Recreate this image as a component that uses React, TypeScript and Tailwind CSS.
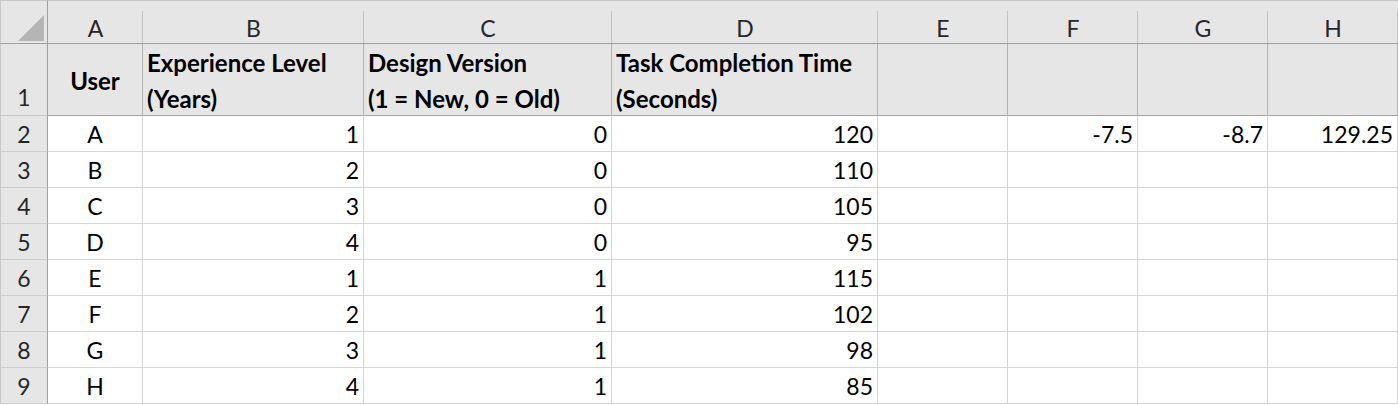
import React from "react";

const letters = ["A", "B", "C", "D", "E", "F", "G", "H"];

const data: string[][] = [
  ["A", "1", "0", "120", "", "-7.5", "-8.7", "129.25"],
  ["B", "2", "0", "110", "", "", "", ""],
  ["C", "3", "0", "105", "", "", "", ""],
  ["D", "4", "0", "95", "", "", "", ""],
  ["E", "1", "1", "115", "", "", "", ""],
  ["F", "2", "1", "102", "", "", "", ""],
  ["G", "3", "1", "98", "", "", "", ""],
  ["H", "4", "1", "85", "", "", "", ""],
];

function ColHeader({ label }: { label: string }) {
  return (
    <div className="relative flex items-end justify-center border-t border-b border-t-[#c8c8c8] border-b-[#9f9f9f] bg-[#e6e6e6] leading-[30px] text-[#262626] after:absolute after:right-0 after:top-[10px] after:bottom-0 after:w-px after:bg-[#c4c4c4]">
      {label}
    </div>
  );
}

function HeadCell({ lines, center }: { lines: string[]; center?: boolean }) {
  return (
    <div
      className={
        "flex flex-col border-r border-b border-r-[#b2b2b2] border-b-[#a3a3a3] bg-[#e7e6e6] px-[4px] text-[24px] font-bold leading-[36px] text-black " +
        (center ? "items-center justify-center pt-[2px]" : "justify-start pt-[1px]")
      }
    >
      {lines.map((l) => (
        <span key={l} className="whitespace-nowrap">
          {l}
        </span>
      ))}
    </div>
  );
}

export default function App() {
  return (
    <div className="h-[405px] w-[1398px] overflow-hidden bg-white font-['Lato',sans-serif] text-[23px]">
      <div className="grid grid-cols-[48px_95px_221px_248px_266px_130px_130px_130px_130px] grid-rows-[44px_72px_repeat(8,36px)]">
        {/* corner */}
        <div className="flex items-end border-t border-l border-r border-b border-t-[#c8c8c8] border-l-[#c8c8c8] border-r-[#9f9f9f] border-b-[#9f9f9f] bg-[#e6e6e6]">
          <svg width="46" height="42" viewBox="0 0 46 42" className="block">
            <polygon points="17,40 43,14 43,40" fill="#b5b5b5" />
          </svg>
        </div>
        {letters.map((l) => (
          <ColHeader key={l} label={l} />
        ))}

        {/* row 1 */}
        <div className="flex items-end justify-center border-l border-r border-b border-l-[#c8c8c8] border-r-[#9f9f9f] border-b-[#c8c8c8] bg-[#e6e6e6] leading-[36px] text-[#262626]">
          1
        </div>
        <HeadCell lines={["User"]} center />
        <HeadCell lines={["Experience Level", "(Years)"]} />
        <HeadCell lines={["Design Version", "(1 = New, 0 = Old)"]} />
        <HeadCell lines={["Task Completion Time", "(Seconds)"]} />
        <HeadCell lines={[]} />
        <HeadCell lines={[]} />
        <HeadCell lines={[]} />
        <HeadCell lines={[]} />

        {data.map((row, r) => (
          <React.Fragment key={r}>
            <div className="flex items-center justify-center border-l border-r border-b border-l-[#c8c8c8] border-r-[#9f9f9f] border-b-[#cdcdcd] bg-[#e6e6e6] pt-[1px] text-[#262626]">
              {r + 2}
            </div>
            {row.map((v, c) => (
              <div
                key={c}
                className={
                  "flex items-center border-r border-b border-[#d4d4d4] px-[4px] pt-[1px] text-black " +
                  (c === 0 ? "justify-center" : "justify-end")
                }
              >
                {v}
              </div>
            ))}
          </React.Fragment>
        ))}
      </div>
    </div>
  );
}
